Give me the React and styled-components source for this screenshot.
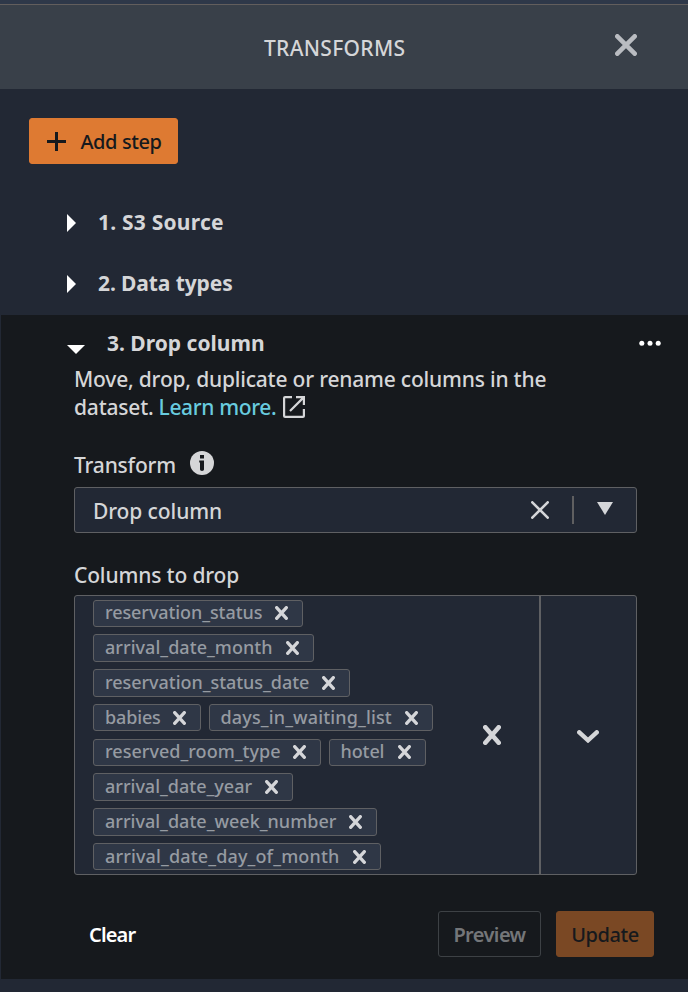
import React from 'react';
import styled, { createGlobalStyle } from 'styled-components';

const GlobalStyle = createGlobalStyle`
  * { box-sizing: border-box; }
  body { margin: 0; background: #222834; }
  button { font: inherit; }
`;

const Page = styled.main`
  display: flex;
  flex-direction: column;
  width: 688px;
  height: 992px;
  overflow: hidden;
  background: #222834;
  color: #d5d6d8;
  font-family: 'Noto Sans', 'Open Sans', sans-serif;
  font-size: 21px;
  font-weight: 500;
`;

const Label = styled.span`
  letter-spacing: ${(p) => p.$track || 0}px;
  white-space: nowrap;
`;

const Header = styled.header`
  display: flex;
  align-items: center;
  justify-content: space-between;
  flex: none;
  height: 89px;
  padding: 0 51px 0 264px;
  border-top: 4px solid #2e3849;
  background: #394049;
  box-shadow: inset 0 1px #625e5d;
`;

const Title = styled.h1`
  margin: 3px 0 0;
  font-size: 21px;
  font-weight: 500;
  line-height: 28px;
`;

const IconButton = styled.button`
  display: flex;
  align-items: center;
  justify-content: center;
  flex: none;
  width: ${(p) => p.$w}px;
  height: ${(p) => p.$h || p.$w}px;
  padding: 0;
  border: 0;
  background: none;
  color: ${(p) => p.$color || '#d5d6d9'};
`;

const CloseButton = styled(IconButton)`
  margin-bottom: 4px;
`;

const Toolbar = styled.div`
  flex: none;
  height: 103px;
  padding: 29px 29px 0;
`;

const Button = styled.button`
  display: flex;
  align-items: center;
  justify-content: center;
  gap: 14px;
  width: ${(p) => p.$w}px;
  height: 46px;
  padding: 2px 0 0 ${(p) => p.$indent || 0}px;
  border: 1px solid ${(p) => p.$border || p.$bg};
  border-radius: 3px;
  background: ${(p) => p.$bg || 'transparent'};
  color: ${(p) => p.$color};
  font-size: 20px;
  font-weight: ${(p) => p.$weight || 500};
  line-height: 28px;
`;

const PlusIcon = styled.svg`
  margin-top: -2px;
`;

const StepRow = styled.div`
  display: flex;
  align-items: center;
  flex: none;
  gap: 22px;
  height: 61px;
  padding-left: 67px;
  font-weight: 700;
`;

const StepName = styled(Label)`
  margin-top: -2px;
`;

const ActiveStep = styled.section`
  flex: none;
  height: 664px;
  margin: 1px 0 0 1px;
  padding-left: 66px;
  background: #16191d;
`;

const ActiveHead = styled.div`
  display: flex;
  align-items: center;
  height: 50px;
  padding: 6px 27px 0 0;
  font-weight: 700;
`;

const ActiveTitle = styled.div`
  flex: 1;
  padding-left: 22px;
`;

const CaretDown = styled.span`
  display: flex;
  padding-top: 12px;
`;

const Form = styled.div`
  width: 570px;
  padding-left: 7px;
`;

const Description = styled.p`
  margin: 0;
  height: 56px;
  line-height: 28px;
`;

const Line = styled.span`
  display: flex;
  align-items: center;
  height: 28px;
`;

const Link = styled.a`
  margin: 0 7px 0 5px;
  color: #68cbdf;
`;

const FieldLabel = styled.div`
  display: flex;
  align-items: center;
  gap: 14px;
  height: 28px;
  margin-top: ${(p) => p.$top}px;
`;

const InfoIcon = styled.svg`
  margin-bottom: 4px;
`;

const Select = styled.div`
  display: flex;
  align-items: center;
  height: 46px;
  margin-top: 8px;
  padding-left: 18px;
  border: 1px solid #5f6063;
  border-radius: 3px;
  background: #222834;
`;

const SelectValue = styled.div`
  flex: 1;
  padding-top: 2px;
`;

const Divider = styled.span`
  width: 2px;
  height: 28px;
  margin-left: 22px;
  background: #5f5f60;
`;

const ArrowButton = styled(IconButton)`
  margin-bottom: 3px;
`;

const MultiSelect = styled.div`
  display: flex;
  height: 280px;
  margin-top: 6px;
  border: 1px solid #5f6063;
  border-radius: 3px;
  background: #222834;
`;

const ChipList = styled.div`
  display: flex;
  flex-wrap: wrap;
  align-content: flex-start;
  flex: none;
  gap: 7.25px 7.5px;
  width: 369px;
  padding: 3.6px 0 0 18px;
`;

const Chip = styled.div`
  display: flex;
  align-items: center;
  justify-content: space-between;
  width: ${(p) => p.$w}px;
  height: 27.5px;
  padding: 0 14px 0 11px;
  border: 1px solid #5f6063;
  border-radius: 3px;
  background: #2f3746;
  color: #969ba2;
  font-size: 18px;
  line-height: 24px;
`;

const ChipText = styled(Label)`
  margin-top: -2px;
`;

const ClearAll = styled.div`
  display: flex;
  align-items: center;
  justify-content: center;
  flex: 1;
`;

const Toggle = styled.div`
  display: flex;
  align-items: center;
  justify-content: center;
  width: 97px;
  padding: 2px 2px 0 0;
  border-left: 2px solid #5f6063;
`;

const Actions = styled.footer`
  display: flex;
  align-items: center;
  gap: 15px;
  height: 46px;
  margin: 36px 0 0 22px;
  width: 565px;
`;

const ClearText = styled.button`
  margin-right: auto;
  padding: 2px 0 0;
  border: 0;
  background: none;
  color: #fff;
  font-size: 20px;
  font-weight: 600;
  line-height: 28px;
`;

const Cross = ({ w, h, stroke }) => {
  const p = stroke / 2;
  return (
    <svg width={w} height={h} viewBox={`0 0 ${w} ${h}`} fill="none">
      <path
        d={`M${p} ${p}L${w - p} ${h - p}M${w - p} ${p}L${p} ${h - p}`}
        stroke="currentColor"
        strokeWidth={stroke}
        strokeLinecap="round"
      />
    </svg>
  );
};

const CaretRight = () => (
  <svg width="9" height="18" viewBox="0 0 9 18">
    <path d="M0 0L9 9L0 18Z" fill="#fff" />
  </svg>
);

const chips = [
  ['reservation_status', 210, -0.08],
  ['arrival_date_month', 221, 0.04],
  ['reservation_status_date', 257, -0.04],
  ['babies', 108, -0.15],
  ['days_in_waiting_list', 224.5, 0.14],
  ['reserved_room_type', 228, 0.03],
  ['hotel', 97, -0.1],
  ['arrival_date_year', 200, 0],
  ['arrival_date_week_number', 284, 0.01],
  ['arrival_date_day_of_month', 288, 0.14],
];

const steps = [
  ['1. S3 Source', 0.22],
  ['2. Data types', -0.1],
];

export default function App() {
  return (
    <Page>
      <GlobalStyle />
      <Header>
        <Title>
          <Label $track={0.3}>TRANSFORMS</Label>
        </Title>
        <CloseButton $w={23} $color="#b9bcc1" aria-label="Close">
          <Cross w={22} h={22} stroke={4.6} />
        </CloseButton>
      </Header>
      <Toolbar>
        <Button $w={149} $indent={2} $bg="#de7a32" $color="#16191d">
          <PlusIcon width="19" height="19" viewBox="0 0 19 19">
            <path d="M9.5 0V19M0 9.5H19" stroke="currentColor" strokeWidth="3" />
          </PlusIcon>
          <Label $track={-0.4}>Add step</Label>
        </Button>
      </Toolbar>
      {steps.map(([name, track]) => (
        <StepRow key={name}>
          <CaretRight />
          <StepName $track={track}>{name}</StepName>
        </StepRow>
      ))}
      <ActiveStep>
        <ActiveHead>
          <CaretDown>
            <svg width="18" height="9" viewBox="0 0 18 9">
              <path d="M0 0H18L9 9Z" fill="#fff" />
            </svg>
          </CaretDown>
          <ActiveTitle>
            <Label>3. Drop column</Label>
          </ActiveTitle>
          <IconButton $w={22} $h={8} $color="#fff" aria-label="More">
            <svg width="22" height="6" viewBox="0 0 22 6" fill="currentColor">
              <circle cx="2.8" cy="3.3" r="2.5" />
              <circle cx="11" cy="3.3" r="2.5" />
              <circle cx="19.2" cy="3.3" r="2.5" />
            </svg>
          </IconButton>
        </ActiveHead>
        <Form>
          <Description>
            <Line>
              <Label $track={-0.2}>Move, drop, duplicate or rename columns in the</Label>
            </Line>
            <Line>
              <Label $track={-0.2}>dataset.</Label>
              <Link>
                <Label $track={-0.35}>Learn more.</Label>
              </Link>
              <svg width="22" height="22" viewBox="0 0 22 22" fill="none" stroke="currentColor" strokeWidth="2.2">
                <path d="M9 1.1H2.1Q1.1 1.1 1.1 2.1V19.9Q1.1 20.9 2.1 20.9H19.9Q20.9 20.9 20.9 19.9V13" />
                <path d="M13 1.1H20.9V9M20.9 1.1L7 15" />
              </svg>
            </Line>
          </Description>
          <FieldLabel $top={30}>
            <Label $track={-0.2}>Transform</Label>
            <InfoIcon width="24" height="24" viewBox="0 0 24 24">
              <circle cx="12" cy="12" r="12" fill="currentColor" />
              <path d="M10 4h4v3.4h-4zM9.2 9.6H14V18.6Q14 20 12 20T10 18.6V11.4H9.2z" fill="#16191d" />
            </InfoIcon>
          </FieldLabel>
          <Select>
            <SelectValue>
              <Label $track={-0.1}>Drop column</Label>
            </SelectValue>
            <IconButton $w={20} aria-label="Clear transform">
              <Cross w={18} h={18} stroke={2.6} />
            </IconButton>
            <Divider />
            <ArrowButton $w={62} $h={18} aria-label="Open transforms">
              <svg width="16" height="13" viewBox="0 0 16 13">
                <path d="M0 0H16L8 13Z" fill="currentColor" />
              </svg>
            </ArrowButton>
          </Select>
          <FieldLabel $top={28}>
            <Label $track={-0.15}>Columns to drop</Label>
          </FieldLabel>
          <MultiSelect>
            <ChipList>
              {chips.map(([name, width, track]) => (
                <Chip key={name} $w={width}>
                  <ChipText $track={track}>{name}</ChipText>
                  <IconButton $w={13} $h={14} aria-label={`Remove ${name}`}>
                    <Cross w={13} h={14} stroke={3.3} />
                  </IconButton>
                </Chip>
              ))}
            </ChipList>
            <ClearAll>
              <IconButton $w={20} aria-label="Clear all columns">
                <Cross w={18} h={20} stroke={4.6} />
              </IconButton>
            </ClearAll>
            <Toggle>
              <svg width="22" height="13" viewBox="0 0 22 13" fill="none">
                <path d="M2.3 2.3L11 10.3L19.7 2.3" stroke="currentColor" strokeWidth="4.4" strokeLinecap="round" />
              </svg>
            </Toggle>
          </MultiSelect>
        </Form>
        <Actions>
          <ClearText>
            <Label $track={-0.85}>Clear</Label>
          </ClearText>
          <Button $w={103} $border="#3d4145" $color="#747679" $weight={600}>
            <Label $track={-0.6}>Preview</Label>
          </Button>
          <Button $w={98} $bg="#7a4824" $color="#16191d">
            <Label $track={-0.4}>Update</Label>
          </Button>
        </Actions>
      </ActiveStep>
    </Page>
  );
}
